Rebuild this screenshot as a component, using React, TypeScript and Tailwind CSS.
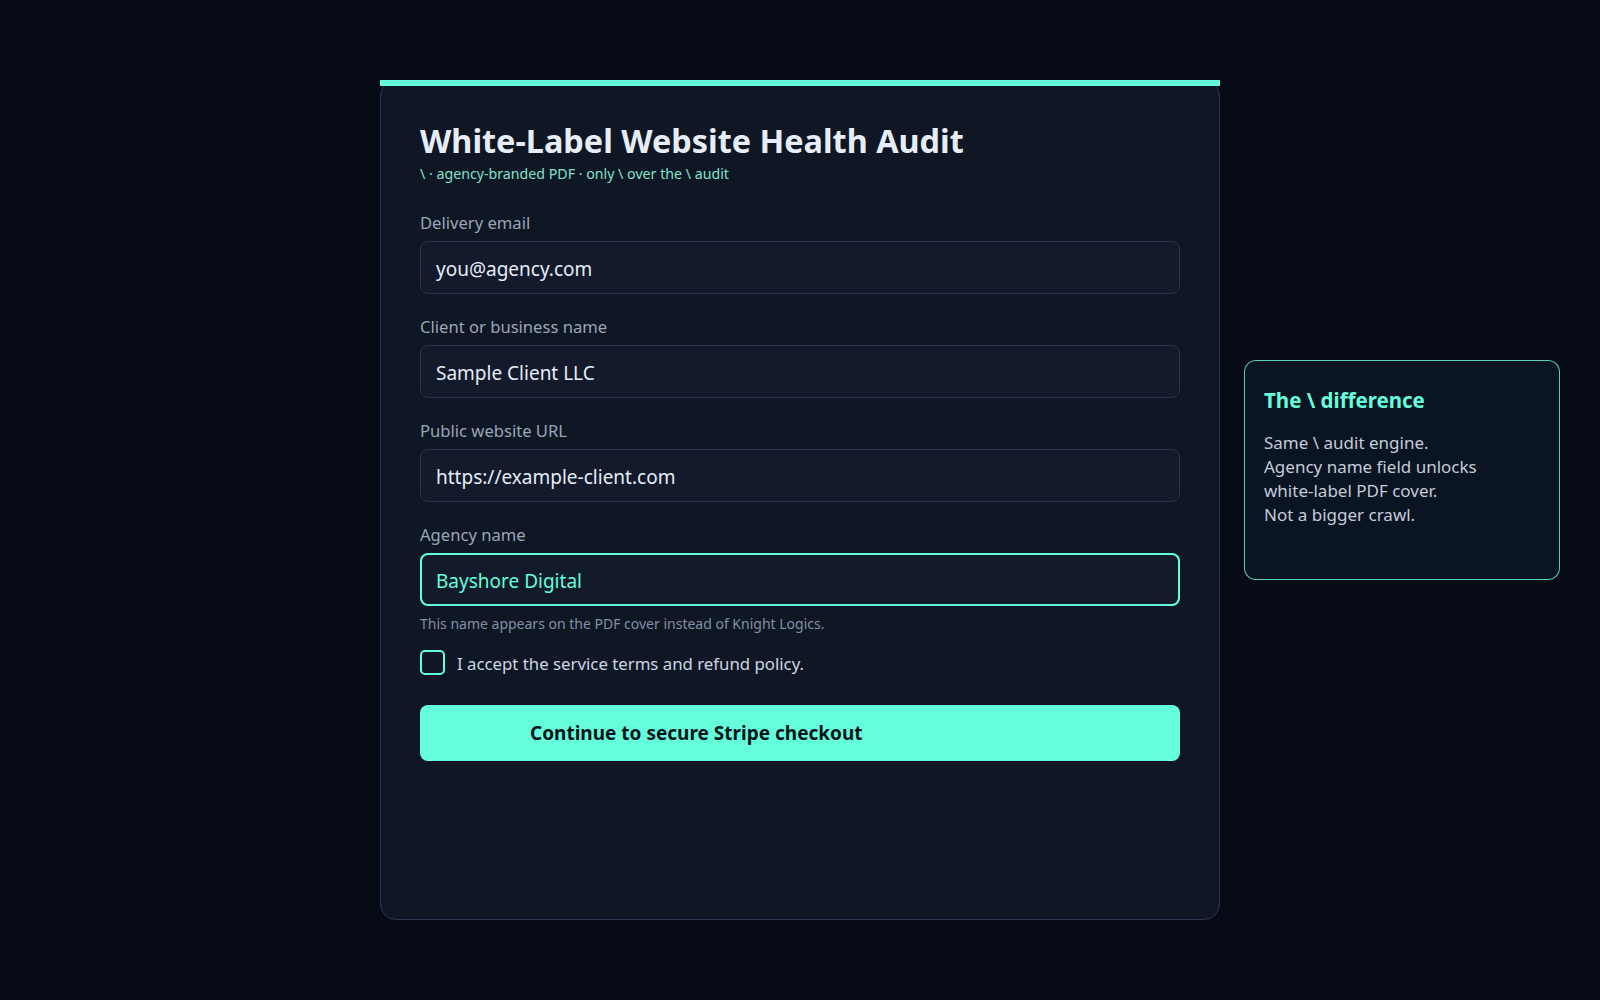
import React from "react";

const font = { fontFamily: '"Noto Sans", "Open Sans", sans-serif' };

function Field({ label, value, active }: { label: string; value: string; active?: boolean }) {
  return (
    <div className="flex flex-col">
      <label className="text-[16.6px] leading-[24px] text-[#9aa6b8]">{label}</label>
      <div
        className={
          active
            ? "mt-[6px] flex h-[53px] items-center rounded-[8px] border-2 border-[#64ffda] bg-[#121a2c] px-[14px] pt-[3px] text-[19px] text-[#64ffda]"
            : "mt-[6px] flex h-[53px] items-center rounded-[8px] border border-[#28344f] bg-[#121a2c] px-[15px] pt-[3px] text-[19px] text-[#e6edf7]"
        }
      >
        {value}
      </div>
    </div>
  );
}

export default function App() {
  return (
    <div className="min-h-[1000px] w-full bg-[#070b16]" style={font}>
      <div className="flex justify-center pt-[80px]">
        <div className="relative h-[840px] w-[840px]">
          <div className="h-full w-full rounded-[16px] border border-[#2a3654] bg-[#0f1624] px-[39px] pt-[39px]">
            <h1 className="text-[32.4px] font-bold leading-[40px] text-[#e6edf7]">
              White-Label Website Health Audit
            </h1>
            <p className="mt-[4px] text-[14.2px] leading-[20px] text-[#7fe3cb]">
              \ · agency-branded PDF · only \ over the \ audit
            </p>
            <div className="mt-[27px] flex flex-col gap-[21px]">
              <Field label="Delivery email" value="you@agency.com" />
              <Field label="Client or business name" value="Sample Client LLC" />
              <Field label="Public website URL" value="https://example-client.com" />
              <div className="flex flex-col">
                <Field label="Agency name" value="Bayshore Digital" active />
                <p className="mt-[8px] text-[14px] leading-[20px] text-[#8391a7]">
                  This name appears on the PDF cover instead of Knight Logics.
                </p>
                <div className="mt-[14px] flex items-center gap-[12px]">
                  <div className="h-[25px] w-[25px] rounded-[5px] border-2 border-[#64ffda] bg-[#0f1624]" />
                  <span className="mt-[4px] text-[16.8px] leading-[24px] text-[#cdd6e3]">
                    I accept the service terms and refund policy.
                  </span>
                </div>
              </div>
            </div>
            <button className="mt-[29px] flex h-[56px] w-full items-center rounded-[8px] bg-[#64ffda] pl-[110px] text-[19px] font-bold text-[#07131a]">
              Continue to secure Stripe checkout
            </button>
          </div>
          <div className="absolute left-0 right-0 top-0 h-[6px] bg-[#64ffda]" />
          <aside className="absolute left-[864px] top-[280px] h-[220px] w-[316px] rounded-[12px] border border-[#64ffda]/80 bg-[#0b1422] px-[19px] pt-[25px]">
            <h2 className="text-[20.5px] font-bold leading-[28px] text-[#64ffda]">The \ difference</h2>
            <p className="mt-[17px] text-[17px] leading-[24px] text-[#c3ccd9]">
              Same \ audit engine.
              <br />
              Agency name field unlocks
              <br />
              white-label PDF cover.
              <br />
              Not a bigger crawl.
            </p>
          </aside>
        </div>
      </div>
    </div>
  );
}
